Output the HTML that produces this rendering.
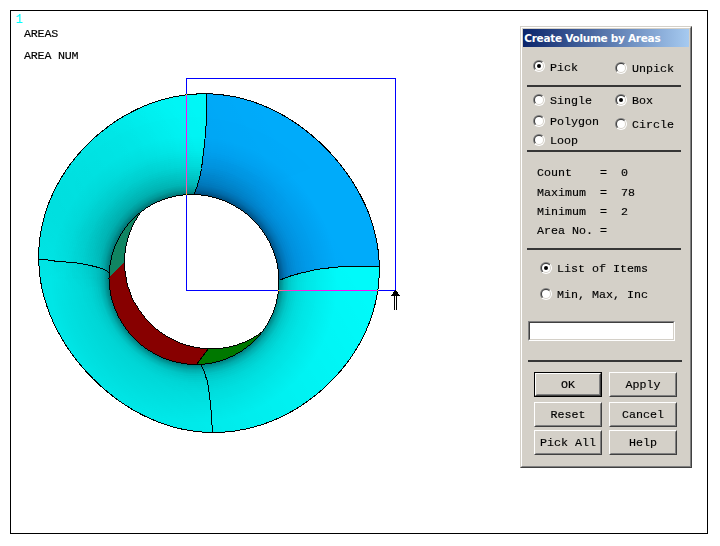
<!DOCTYPE html>
<html><head><meta charset="utf-8"><title>Create Volume by Areas</title>
<style>
html,body{margin:0;padding:0;background:#fff}
body{width:720px;height:546px;position:relative;overflow:hidden;font-family:"Liberation Mono",monospace;font-size:11.67px;color:#000}
.g{font-size:12px;letter-spacing:-0.2px;-webkit-text-stroke-width:0.2px}
.abs{position:absolute}
#frame{position:absolute;left:10px;top:10px;width:696px;height:522px;border:1px solid #000}
.m{position:absolute;white-space:pre;line-height:14px;height:14px;font-family:"Liberation Mono",monospace;font-size:11.67px;-webkit-text-stroke-width:0.15px}
#dlg{position:absolute;left:520px;top:26px;width:172px;height:442px;background:#d4d0c8;box-sizing:border-box;border:1px solid;border-color:#d4d0c8 #404040 #404040 #d4d0c8}
#dlg:before{content:"";position:absolute;left:0;top:0;right:0;bottom:0;border:1px solid;border-color:#fff #808080 #808080 #fff}
#title{position:absolute;left:523px;top:29px;width:166px;height:18px;background:linear-gradient(90deg,#0a246a,#a6caf0);color:#fff;font-family:"DejaVu Sans","Liberation Sans",sans-serif;font-weight:bold;font-size:10.5px;letter-spacing:-0.28px;line-height:18px;white-space:nowrap}
#title span{position:absolute;left:1.3px;top:0}
.r{position:absolute;width:12px;height:12px;border-radius:50%;background:linear-gradient(135deg,#808080 50%,#fff 50%)}
.r i{position:absolute;border-radius:50%}
.r .a{left:1px;top:1px;width:10px;height:10px;background:linear-gradient(135deg,#404040 50%,#d4d0c8 50%)}
.r .b{left:2px;top:2px;width:8px;height:8px;background:#fff}
.r .d{left:4px;top:4px;width:4px;height:4px;background:#000}
.sep{position:absolute;height:2px;background:#363636}
.inp{position:absolute;background:#fff;box-sizing:border-box;border:1px solid;border-color:#808080 #fff #fff #808080}
.inp:before{content:"";position:absolute;left:0;top:0;right:0;bottom:0;border:1px solid;border-color:#404040 #d4d0c8 #d4d0c8 #404040}
.btn{position:absolute;width:68px;height:25px;box-sizing:border-box;background:#d4d0c8;border:1px solid;border-color:#fff #404040 #404040 #fff;text-align:center}
.btn:before{content:"";position:absolute;left:0;top:0;right:0;bottom:0;border:1px solid;border-color:#d4d0c8 #808080 #808080 #d4d0c8}
.btn span{position:absolute;left:0;right:0;top:5px;line-height:14px;-webkit-text-stroke-width:0.15px}
.btn.def{border-color:#000;}
.btn.def:before{border-color:#fff #404040 #404040 #fff}
.btn.def:after{content:"";position:absolute;left:1px;top:1px;right:1px;bottom:1px;border:1px solid;border-color:#d4d0c8 #808080 #808080 #d4d0c8}
#box{position:absolute;left:186px;top:78px;width:208px;height:211px;border:1px solid #ffff00;mix-blend-mode:difference}
</style></head><body>
<svg id="tor" width="720" height="546" viewBox="0 0 720 546" style="position:absolute;left:0;top:0">
<defs>
<clipPath id="cE1"><path d="M379.2,263.1 L379.3,272.0 L378.9,281.0 L377.9,289.9 L376.4,298.7 L374.3,307.4 L371.8,316.0 L368.7,324.4 L365.2,332.6 L361.2,340.6 L356.8,348.4 L352.0,355.9 L346.8,363.2 L341.2,370.2 L335.3,376.9 L329.1,383.2 L322.6,389.3 L315.8,395.0 L308.8,400.4 L301.5,405.5 L293.9,410.2 L286.1,414.4 L278.1,418.3 L269.9,421.8 L261.5,424.8 L253.0,427.3 L244.3,429.3 L235.6,430.9 L226.7,431.9 L217.9,432.4 L209.0,432.4 L200.2,431.9 L191.4,430.8 L182.7,429.3 L174.1,427.2 L165.7,424.7 L157.5,421.7 L149.4,418.3 L141.6,414.6 L133.9,410.4 L126.6,405.9 L119.4,401.1 L112.5,395.9 L105.8,390.5 L99.4,384.9 L93.2,378.9 L87.2,372.7 L81.6,366.3 L76.1,359.6 L71.0,352.7 L66.1,345.6 L61.6,338.2 L57.4,330.6 L53.5,322.8 L50.0,314.7 L47.0,306.5 L44.4,298.1 L42.2,289.5 L40.5,280.8 L39.4,272.0 L38.8,263.1 L38.7,254.2 L39.1,245.2 L40.1,236.3 L41.6,227.5 L43.7,218.8 L46.2,210.2 L49.3,201.8 L52.8,193.6 L56.8,185.6 L61.2,177.8 L66.0,170.3 L71.2,163.0 L76.8,156.0 L82.7,149.3 L88.9,143.0 L95.4,136.9 L102.2,131.2 L109.2,125.8 L116.5,120.7 L124.1,116.0 L131.9,111.8 L139.9,107.9 L148.1,104.4 L156.5,101.4 L165.0,98.9 L173.7,96.9 L182.4,95.3 L191.3,94.3 L200.1,93.8 L209.0,93.8 L217.8,94.3 L226.6,95.4 L235.3,96.9 L243.9,99.0 L252.3,101.5 L260.5,104.5 L268.6,107.9 L276.4,111.6 L284.1,115.8 L291.4,120.3 L298.6,125.1 L305.5,130.3 L312.2,135.7 L318.6,141.3 L324.8,147.3 L330.8,153.5 L336.4,159.9 L341.9,166.6 L347.0,173.5 L351.9,180.6 L356.4,188.0 L360.6,195.6 L364.5,203.4 L368.0,211.5 L371.0,219.7 L373.6,228.1 L375.8,236.7 L377.5,245.4 L378.6,254.2Z"/></clipPath>
<clipPath id="cE2"><ellipse cx="194" cy="279.5" rx="86" ry="84" transform="rotate(45 194 279.5)"/></clipPath>
<filter id="bl" x="-30%" y="-30%" width="160%" height="160%"><feGaussianBlur stdDeviation="7"/></filter>
<filter id="bl2" x="-30%" y="-30%" width="160%" height="160%"><feGaussianBlur stdDeviation="3"/></filter>
<linearGradient id="fade" gradientUnits="userSpaceOnUse" x1="182.6" y1="251.9" x2="159.8" y2="196.7">
<stop offset="0" stop-color="#000"/><stop offset="0.25" stop-color="#333"/><stop offset="0.6" stop-color="#aaa"/><stop offset="1" stop-color="#fff"/></linearGradient>
<linearGradient id="fade2" gradientUnits="userSpaceOnUse" x1="144.5" y1="329" x2="123.3" y2="350.2">
<stop offset="0" stop-color="#fff"/><stop offset="1" stop-color="#000"/></linearGradient>
<mask id="mfade2"><rect x="0" y="0" width="720" height="546" fill="url(#fade2)"/></mask>
<linearGradient id="gdim" gradientUnits="userSpaceOnUse" x1="313.4" y1="203.1" x2="78.5" y2="338.1">
<stop offset="0" stop-color="#000" stop-opacity="0.02"/><stop offset="1" stop-color="#000" stop-opacity="0.10"/></linearGradient>
<radialGradient id="blob" gradientUnits="userSpaceOnUse" cx="100" cy="185" r="105">
<stop offset="0" stop-color="#000" stop-opacity="0.05"/><stop offset="0.5" stop-color="#000" stop-opacity="0.04"/><stop offset="1" stop-color="#000" stop-opacity="0"/></radialGradient>
<mask id="mfade"><rect x="0" y="0" width="720" height="546" fill="url(#fade)"/></mask>
</defs>
<g clip-path="url(#cE1)">
<rect x="30" y="80" width="360" height="360" fill="#00ffff"/>
<path d="M206.4,93.0 L206.4,95.2 L206.4,97.4 L206.4,99.7 L206.4,102.0 L206.4,104.2 L206.4,106.5 L206.4,108.7 L206.4,110.9 L206.4,113.0 L206.4,115.1 L206.3,117.0 L206.3,118.8 L206.2,120.5 L206.2,122.1 L206.1,123.6 L206.1,125.0 L206.0,126.3 L205.9,127.6 L205.8,128.9 L205.7,130.1 L205.6,131.3 L205.5,132.5 L205.4,133.7 L205.3,135.0 L205.2,136.2 L205.1,137.4 L205.0,138.6 L204.9,139.7 L204.8,140.9 L204.7,142.0 L204.5,143.1 L204.4,144.3 L204.3,145.5 L204.1,146.8 L204.0,148.1 L203.8,149.5 L203.6,151.0 L203.4,152.6 L203.2,154.3 L203.0,156.1 L202.8,157.9 L202.6,159.8 L202.4,161.6 L202.2,163.4 L201.9,165.2 L201.7,166.9 L201.5,168.5 L201.2,170.0 L200.9,171.4 L200.7,172.8 L200.4,174.2 L200.1,175.4 L199.8,176.7 L199.5,177.9 L199.2,179.1 L198.9,180.2 L198.6,181.3 L198.3,182.4 L198.0,183.4 L197.7,184.4 L197.4,185.4 L197.1,186.3 L196.8,187.3 L196.4,188.2 L196.1,189.0 L195.8,189.8 L195.4,190.6 L195.1,191.3 L194.9,192.0 L194.6,192.6 L194.4,193.1 L194.2,193.6 L194.1,194.0 L193.9,194.3 L193.9,194.4 L193.8,194.6 L193.8,194.6 L193.8,194.7 L193.8,194.7 L193.8,194.6 L193.8,194.6 L193.7,194.6 L193.7,194.6 L193.7,194.7 L230,250 L280.0,280.0 L280.8,279.7 L281.7,279.4 L282.5,279.0 L283.3,278.7 L284.2,278.4 L285.0,278.0 L285.8,277.7 L286.7,277.4 L287.5,277.1 L288.3,276.8 L289.2,276.5 L290.0,276.2 L290.8,275.9 L291.7,275.7 L292.5,275.4 L293.3,275.1 L294.2,274.9 L295.0,274.6 L295.8,274.4 L296.7,274.2 L297.5,274.0 L298.3,273.7 L299.2,273.5 L300.0,273.3 L300.8,273.1 L301.7,272.9 L302.5,272.7 L303.3,272.5 L304.2,272.3 L305.0,272.2 L305.8,272.0 L306.7,271.8 L307.5,271.6 L308.3,271.5 L309.2,271.3 L310.0,271.1 L310.8,270.9 L311.5,270.8 L312.1,270.6 L312.7,270.4 L313.3,270.2 L313.9,270.1 L314.6,269.9 L315.3,269.7 L316.2,269.6 L317.3,269.4 L318.5,269.2 L320.0,269.0 L321.7,268.8 L323.6,268.6 L325.6,268.3 L327.8,268.1 L330.1,267.8 L332.5,267.5 L335.0,267.3 L337.6,267.0 L340.1,266.8 L342.7,266.6 L345.3,266.4 L347.8,266.3 L350.3,266.2 L352.9,266.1 L355.5,266.1 L358.1,266.0 L360.8,266.0 L363.5,266.0 L366.2,266.0 L368.9,266.0 L371.6,266.0 L374.3,266.0 L377.0,266.0 L379.7,266.0 L430,266 L430,50 L206.4,50Z" fill="#00aeff"/>
<g transform="rotate(45 194 279.5)"><ellipse cx="194" cy="279.5" rx="162.0" ry="160.0" fill="#000" fill-opacity="0.0017"/>
<ellipse cx="194" cy="279.5" rx="160.0" ry="158.0" fill="#000" fill-opacity="0.0017"/>
<ellipse cx="194" cy="279.5" rx="158.0" ry="156.0" fill="#000" fill-opacity="0.0017"/>
<ellipse cx="194" cy="279.5" rx="156.0" ry="154.0" fill="#000" fill-opacity="0.0017"/>
<ellipse cx="194" cy="279.5" rx="154.0" ry="152.0" fill="#000" fill-opacity="0.0017"/>
<ellipse cx="194" cy="279.5" rx="152.0" ry="150.0" fill="#000" fill-opacity="0.0017"/>
<ellipse cx="194" cy="279.5" rx="150.0" ry="148.0" fill="#000" fill-opacity="0.0017"/>
<ellipse cx="194" cy="279.5" rx="148.0" ry="146.0" fill="#000" fill-opacity="0.0017"/>
<ellipse cx="194" cy="279.5" rx="146.0" ry="144.0" fill="#000" fill-opacity="0.0017"/>
<ellipse cx="194" cy="279.5" rx="144.0" ry="142.0" fill="#000" fill-opacity="0.0030"/>
<ellipse cx="194" cy="279.5" rx="142.0" ry="140.0" fill="#000" fill-opacity="0.0031"/>
<ellipse cx="194" cy="279.5" rx="140.0" ry="138.0" fill="#000" fill-opacity="0.0031"/>
<ellipse cx="194" cy="279.5" rx="138.0" ry="136.0" fill="#000" fill-opacity="0.0031"/>
<ellipse cx="194" cy="279.5" rx="136.0" ry="134.0" fill="#000" fill-opacity="0.0031"/>
<ellipse cx="194" cy="279.5" rx="134.0" ry="132.0" fill="#000" fill-opacity="0.0031"/>
<ellipse cx="194" cy="279.5" rx="132.0" ry="130.0" fill="#000" fill-opacity="0.0031"/>
<ellipse cx="194" cy="279.5" rx="130.0" ry="128.0" fill="#000" fill-opacity="0.0031"/>
<ellipse cx="194" cy="279.5" rx="128.0" ry="126.0" fill="#000" fill-opacity="0.0031"/>
<ellipse cx="194" cy="279.5" rx="126.0" ry="124.0" fill="#000" fill-opacity="0.0031"/>
<ellipse cx="194" cy="279.5" rx="124.0" ry="122.0" fill="#000" fill-opacity="0.0037"/>
<ellipse cx="194" cy="279.5" rx="122.0" ry="120.0" fill="#000" fill-opacity="0.0037"/>
<ellipse cx="194" cy="279.5" rx="120.0" ry="118.0" fill="#000" fill-opacity="0.0037"/>
<ellipse cx="194" cy="279.5" rx="118.0" ry="116.0" fill="#000" fill-opacity="0.0037"/>
<ellipse cx="194" cy="279.5" rx="116.0" ry="114.0" fill="#000" fill-opacity="0.0037"/>
<ellipse cx="194" cy="279.5" rx="114.0" ry="112.0" fill="#000" fill-opacity="0.0037"/>
<ellipse cx="194" cy="279.5" rx="112.0" ry="110.0" fill="#000" fill-opacity="0.0037"/>
<ellipse cx="194" cy="279.5" rx="110.0" ry="108.0" fill="#000" fill-opacity="0.0038"/>
<ellipse cx="194" cy="279.5" rx="108.0" ry="106.0" fill="#000" fill-opacity="0.0038"/>
<ellipse cx="194" cy="279.5" rx="106.0" ry="104.0" fill="#000" fill-opacity="0.0038"/>
<ellipse cx="194" cy="279.5" rx="104.0" ry="102.0" fill="#000" fill-opacity="0.0087"/>
<ellipse cx="194" cy="279.5" rx="102.0" ry="100.0" fill="#000" fill-opacity="0.0088"/>
<ellipse cx="194" cy="279.5" rx="100.0" ry="98.0" fill="#000" fill-opacity="0.0088"/>
<ellipse cx="194" cy="279.5" rx="98.0" ry="96.0" fill="#000" fill-opacity="0.0089"/>
<ellipse cx="194" cy="279.5" rx="96.0" ry="94.0" fill="#000" fill-opacity="0.0090"/>
<ellipse cx="194" cy="279.5" rx="95.0" ry="93.0" fill="#000" fill-opacity="0.0227"/>
<ellipse cx="194" cy="279.5" rx="94.0" ry="92.0" fill="#000" fill-opacity="0.0233"/>
<ellipse cx="194" cy="279.5" rx="93.0" ry="91.0" fill="#000" fill-opacity="0.0238"/>
<ellipse cx="194" cy="279.5" rx="92.0" ry="90.0" fill="#000" fill-opacity="0.0244"/>
<ellipse cx="194" cy="279.5" rx="91.0" ry="89.0" fill="#000" fill-opacity="0.0500"/>
<ellipse cx="194" cy="279.5" rx="90.0" ry="88.0" fill="#000" fill-opacity="0.0526"/>
<ellipse cx="194" cy="279.5" rx="89.0" ry="87.0" fill="#000" fill-opacity="0.0556"/>
<ellipse cx="194" cy="279.5" rx="88.0" ry="86.0" fill="#000" fill-opacity="0.0637"/>
<ellipse cx="194" cy="279.5" rx="87.0" ry="85.0" fill="#000" fill-opacity="0.0681"/>
<ellipse cx="194" cy="279.5" rx="86.0" ry="84.0" fill="#000" fill-opacity="0.0730"/></g>
<g mask="url(#mfade2)"><g transform="rotate(45 194 279.5)"><ellipse cx="194" cy="279.5" rx="134.0" ry="132.0" fill="#000" fill-opacity="0.0010"/>
<ellipse cx="194" cy="279.5" rx="132.0" ry="130.0" fill="#000" fill-opacity="0.0010"/>
<ellipse cx="194" cy="279.5" rx="130.0" ry="128.0" fill="#000" fill-opacity="0.0010"/>
<ellipse cx="194" cy="279.5" rx="128.0" ry="126.0" fill="#000" fill-opacity="0.0010"/>
<ellipse cx="194" cy="279.5" rx="126.0" ry="124.0" fill="#000" fill-opacity="0.0010"/>
<ellipse cx="194" cy="279.5" rx="124.0" ry="122.0" fill="#000" fill-opacity="0.0054"/>
<ellipse cx="194" cy="279.5" rx="122.0" ry="120.0" fill="#000" fill-opacity="0.0055"/>
<ellipse cx="194" cy="279.5" rx="120.0" ry="118.0" fill="#000" fill-opacity="0.0055"/>
<ellipse cx="194" cy="279.5" rx="118.0" ry="116.0" fill="#000" fill-opacity="0.0055"/>
<ellipse cx="194" cy="279.5" rx="116.0" ry="114.0" fill="#000" fill-opacity="0.0055"/>
<ellipse cx="194" cy="279.5" rx="114.0" ry="112.0" fill="#000" fill-opacity="0.0068"/>
<ellipse cx="194" cy="279.5" rx="112.0" ry="110.0" fill="#000" fill-opacity="0.0069"/>
<ellipse cx="194" cy="279.5" rx="110.0" ry="108.0" fill="#000" fill-opacity="0.0069"/>
<ellipse cx="194" cy="279.5" rx="108.0" ry="106.0" fill="#000" fill-opacity="0.0070"/>
<ellipse cx="194" cy="279.5" rx="106.0" ry="104.0" fill="#000" fill-opacity="0.0070"/>
<ellipse cx="194" cy="279.5" rx="104.0" ry="102.0" fill="#000" fill-opacity="0.0107"/>
<ellipse cx="194" cy="279.5" rx="102.0" ry="100.0" fill="#000" fill-opacity="0.0108"/>
<ellipse cx="194" cy="279.5" rx="100.0" ry="98.0" fill="#000" fill-opacity="0.0155"/>
<ellipse cx="194" cy="279.5" rx="98.0" ry="96.0" fill="#000" fill-opacity="0.0204"/>
<ellipse cx="194" cy="279.5" rx="96.0" ry="94.0" fill="#000" fill-opacity="0.0209"/></g></g>
<g mask="url(#mfade)"><g transform="rotate(45 194 279.5)"><ellipse cx="194" cy="279.5" rx="164.0" ry="162.0" fill="#000" fill-opacity="0.0050"/>
<ellipse cx="194" cy="279.5" rx="162.0" ry="160.0" fill="#000" fill-opacity="0.0050"/>
<ellipse cx="194" cy="279.5" rx="160.0" ry="158.0" fill="#000" fill-opacity="0.0051"/>
<ellipse cx="194" cy="279.5" rx="158.0" ry="156.0" fill="#000" fill-opacity="0.0051"/>
<ellipse cx="194" cy="279.5" rx="156.0" ry="154.0" fill="#000" fill-opacity="0.0051"/>
<ellipse cx="194" cy="279.5" rx="154.0" ry="152.0" fill="#000" fill-opacity="0.0045"/>
<ellipse cx="194" cy="279.5" rx="152.0" ry="150.0" fill="#000" fill-opacity="0.0045"/>
<ellipse cx="194" cy="279.5" rx="150.0" ry="148.0" fill="#000" fill-opacity="0.0046"/>
<ellipse cx="194" cy="279.5" rx="148.0" ry="146.0" fill="#000" fill-opacity="0.0046"/>
<ellipse cx="194" cy="279.5" rx="146.0" ry="144.0" fill="#000" fill-opacity="0.0046"/>
<ellipse cx="194" cy="279.5" rx="144.0" ry="142.0" fill="#000" fill-opacity="0.0046"/>
<ellipse cx="194" cy="279.5" rx="142.0" ry="140.0" fill="#000" fill-opacity="0.0046"/>
<ellipse cx="194" cy="279.5" rx="140.0" ry="138.0" fill="#000" fill-opacity="0.0047"/>
<ellipse cx="194" cy="279.5" rx="138.0" ry="136.0" fill="#000" fill-opacity="0.0047"/>
<ellipse cx="194" cy="279.5" rx="136.0" ry="134.0" fill="#000" fill-opacity="0.0047"/>
<ellipse cx="194" cy="279.5" rx="134.0" ry="132.0" fill="#000" fill-opacity="0.0047"/>
<ellipse cx="194" cy="279.5" rx="132.0" ry="130.0" fill="#000" fill-opacity="0.0047"/>
<ellipse cx="194" cy="279.5" rx="130.0" ry="128.0" fill="#000" fill-opacity="0.0060"/>
<ellipse cx="194" cy="279.5" rx="128.0" ry="126.0" fill="#000" fill-opacity="0.0073"/>
<ellipse cx="194" cy="279.5" rx="126.0" ry="124.0" fill="#000" fill-opacity="0.0073"/>
<ellipse cx="194" cy="279.5" rx="124.0" ry="122.0" fill="#000" fill-opacity="0.0074"/>
<ellipse cx="194" cy="279.5" rx="122.0" ry="120.0" fill="#000" fill-opacity="0.0074"/>
<ellipse cx="194" cy="279.5" rx="120.0" ry="118.0" fill="#000" fill-opacity="0.0075"/>
<ellipse cx="194" cy="279.5" rx="118.0" ry="116.0" fill="#000" fill-opacity="0.0075"/>
<ellipse cx="194" cy="279.5" rx="116.0" ry="114.0" fill="#000" fill-opacity="0.0076"/>
<ellipse cx="194" cy="279.5" rx="114.0" ry="112.0" fill="#000" fill-opacity="0.0115"/>
<ellipse cx="194" cy="279.5" rx="112.0" ry="110.0" fill="#000" fill-opacity="0.0116"/>
<ellipse cx="194" cy="279.5" rx="110.0" ry="108.0" fill="#000" fill-opacity="0.0118"/>
<ellipse cx="194" cy="279.5" rx="108.0" ry="106.0" fill="#000" fill-opacity="0.0119"/>
<ellipse cx="194" cy="279.5" rx="106.0" ry="104.0" fill="#000" fill-opacity="0.0120"/>
<ellipse cx="194" cy="279.5" rx="104.0" ry="102.0" fill="#000" fill-opacity="0.0049"/>
<ellipse cx="194" cy="279.5" rx="102.0" ry="100.0" fill="#000" fill-opacity="0.0049"/>
<ellipse cx="194" cy="279.5" rx="100.0" ry="98.0" fill="#000" fill-opacity="0.0049"/>
<ellipse cx="194" cy="279.5" rx="98.0" ry="96.0" fill="#000" fill-opacity="0.0050"/>
<ellipse cx="194" cy="279.5" rx="96.0" ry="94.0" fill="#000" fill-opacity="0.0050"/>
<ellipse cx="194" cy="279.5" rx="95.0" ry="93.0" fill="#000" fill-opacity="0.0050"/>
<ellipse cx="194" cy="279.5" rx="94.0" ry="92.0" fill="#000" fill-opacity="0.0050"/>
<ellipse cx="194" cy="279.5" rx="93.0" ry="91.0" fill="#000" fill-opacity="0.0051"/>
<ellipse cx="194" cy="279.5" rx="92.0" ry="90.0" fill="#000" fill-opacity="0.0051"/>
<ellipse cx="194" cy="279.5" rx="91.0" ry="89.0" fill="#000" fill-opacity="0.0051"/></g></g>
<rect x="0" y="60" width="260" height="280" fill="url(#blob)"/>
<rect x="30" y="80" width="360" height="360" fill="url(#gdim)"/>
</g>
<g shape-rendering="crispEdges">
<g clip-path="url(#cE2)">
<rect x="100" y="190" width="190" height="180" fill="#870000"/>
<path d="M90,295.5 L124.4,262.2 L160,180 L90,180Z" fill="#108562"/>
<path d="M208.3,348.7 L196.7,364.2 L190,380 L290,380 L290,300Z" fill="#007800"/>
<path d="M208.3,348.7 L196.7,364.2" stroke="#000" stroke-width="1" fill="none"/>
<ellipse cx="209.5" cy="263.9" rx="86" ry="84" transform="rotate(45 209.5 263.9)" fill="#fff" stroke="#000" stroke-width="1"/>
</g>
<ellipse cx="194" cy="279.5" rx="86" ry="84" transform="rotate(45 194 279.5)" fill="none" stroke="#000" stroke-width="1"/>
<path d="M379.2,263.1 L379.3,272.0 L378.9,281.0 L377.9,289.9 L376.4,298.7 L374.3,307.4 L371.8,316.0 L368.7,324.4 L365.2,332.6 L361.2,340.6 L356.8,348.4 L352.0,355.9 L346.8,363.2 L341.2,370.2 L335.3,376.9 L329.1,383.2 L322.6,389.3 L315.8,395.0 L308.8,400.4 L301.5,405.5 L293.9,410.2 L286.1,414.4 L278.1,418.3 L269.9,421.8 L261.5,424.8 L253.0,427.3 L244.3,429.3 L235.6,430.9 L226.7,431.9 L217.9,432.4 L209.0,432.4 L200.2,431.9 L191.4,430.8 L182.7,429.3 L174.1,427.2 L165.7,424.7 L157.5,421.7 L149.4,418.3 L141.6,414.6 L133.9,410.4 L126.6,405.9 L119.4,401.1 L112.5,395.9 L105.8,390.5 L99.4,384.9 L93.2,378.9 L87.2,372.7 L81.6,366.3 L76.1,359.6 L71.0,352.7 L66.1,345.6 L61.6,338.2 L57.4,330.6 L53.5,322.8 L50.0,314.7 L47.0,306.5 L44.4,298.1 L42.2,289.5 L40.5,280.8 L39.4,272.0 L38.8,263.1 L38.7,254.2 L39.1,245.2 L40.1,236.3 L41.6,227.5 L43.7,218.8 L46.2,210.2 L49.3,201.8 L52.8,193.6 L56.8,185.6 L61.2,177.8 L66.0,170.3 L71.2,163.0 L76.8,156.0 L82.7,149.3 L88.9,143.0 L95.4,136.9 L102.2,131.2 L109.2,125.8 L116.5,120.7 L124.1,116.0 L131.9,111.8 L139.9,107.9 L148.1,104.4 L156.5,101.4 L165.0,98.9 L173.7,96.9 L182.4,95.3 L191.3,94.3 L200.1,93.8 L209.0,93.8 L217.8,94.3 L226.6,95.4 L235.3,96.9 L243.9,99.0 L252.3,101.5 L260.5,104.5 L268.6,107.9 L276.4,111.6 L284.1,115.8 L291.4,120.3 L298.6,125.1 L305.5,130.3 L312.2,135.7 L318.6,141.3 L324.8,147.3 L330.8,153.5 L336.4,159.9 L341.9,166.6 L347.0,173.5 L351.9,180.6 L356.4,188.0 L360.6,195.6 L364.5,203.4 L368.0,211.5 L371.0,219.7 L373.6,228.1 L375.8,236.7 L377.5,245.4 L378.6,254.2Z" fill="none" stroke="#000" stroke-width="1"/>
<path d="M206.4,93.0 L206.4,95.2 L206.4,97.4 L206.4,99.7 L206.4,102.0 L206.4,104.2 L206.4,106.5 L206.4,108.7 L206.4,110.9 L206.4,113.0 L206.4,115.1 L206.3,117.0 L206.3,118.8 L206.2,120.5 L206.2,122.1 L206.1,123.6 L206.1,125.0 L206.0,126.3 L205.9,127.6 L205.8,128.9 L205.7,130.1 L205.6,131.3 L205.5,132.5 L205.4,133.7 L205.3,135.0 L205.2,136.2 L205.1,137.4 L205.0,138.6 L204.9,139.7 L204.8,140.9 L204.7,142.0 L204.5,143.1 L204.4,144.3 L204.3,145.5 L204.1,146.8 L204.0,148.1 L203.8,149.5 L203.6,151.0 L203.4,152.6 L203.2,154.3 L203.0,156.1 L202.8,157.9 L202.6,159.8 L202.4,161.6 L202.2,163.4 L201.9,165.2 L201.7,166.9 L201.5,168.5 L201.2,170.0 L200.9,171.4 L200.7,172.8 L200.4,174.2 L200.1,175.4 L199.8,176.7 L199.5,177.9 L199.2,179.1 L198.9,180.2 L198.6,181.3 L198.3,182.4 L198.0,183.4 L197.7,184.4 L197.4,185.4 L197.1,186.3 L196.8,187.3 L196.4,188.2 L196.1,189.0 L195.8,189.8 L195.4,190.6 L195.1,191.3 L194.9,192.0 L194.6,192.6 L194.4,193.1 L194.2,193.6 L194.1,194.0 L193.9,194.3 L193.9,194.4 L193.8,194.6 L193.8,194.6 L193.8,194.7 L193.8,194.7 L193.8,194.6 L193.8,194.6 L193.7,194.6 L193.7,194.6 L193.7,194.7 M38.3,259.5 L39.3,259.6 L40.3,259.6 L41.4,259.7 L42.4,259.7 L43.5,259.8 L44.5,259.8 L45.5,259.9 L46.5,259.9 L47.5,260.0 L48.4,260.1 L49.2,260.1 L50.0,260.2 L50.7,260.3 L51.2,260.4 L51.7,260.4 L52.1,260.5 L52.5,260.6 L52.9,260.7 L53.2,260.8 L53.6,260.9 L54.0,260.9 L54.5,261.0 L55.1,261.1 L55.8,261.2 L56.6,261.3 L57.5,261.4 L58.5,261.4 L59.5,261.5 L60.6,261.6 L61.7,261.7 L62.8,261.7 L63.9,261.8 L65.0,261.9 L66.0,262.0 L67.0,262.0 L67.9,262.1 L68.8,262.2 L69.6,262.2 L70.4,262.3 L71.1,262.4 L71.9,262.4 L72.6,262.5 L73.3,262.5 L74.0,262.6 L74.7,262.7 L75.3,262.7 L76.0,262.8 L76.7,262.9 L77.4,263.0 L78.0,263.1 L78.6,263.2 L79.2,263.3 L79.8,263.4 L80.4,263.5 L81.0,263.6 L81.6,263.7 L82.2,263.8 L82.9,263.9 L83.5,264.1 L84.2,264.2 L84.9,264.3 L85.6,264.5 L86.4,264.6 L87.1,264.8 L87.9,265.0 L88.6,265.1 L89.4,265.3 L90.2,265.5 L91.0,265.6 L91.8,265.8 L92.5,266.0 L93.3,266.2 L94.1,266.4 L94.9,266.6 L95.7,266.8 L96.5,267.0 L97.3,267.2 L98.0,267.4 L98.8,267.6 L99.6,267.8 L100.4,268.1 L101.1,268.3 L101.8,268.5 L102.5,268.8 L103.1,269.1 L103.8,269.4 L104.4,269.6 L104.9,270.0 L105.5,270.3 L106.0,270.6 L106.5,270.9 L107.1,271.2 L107.6,271.5 L108.1,271.9 L108.6,272.2 L109.2,272.5 M280.0,280.0 L280.8,279.7 L281.7,279.4 L282.5,279.0 L283.3,278.7 L284.2,278.4 L285.0,278.0 L285.8,277.7 L286.7,277.4 L287.5,277.1 L288.3,276.8 L289.2,276.5 L290.0,276.2 L290.8,275.9 L291.7,275.7 L292.5,275.4 L293.3,275.1 L294.2,274.9 L295.0,274.6 L295.8,274.4 L296.7,274.2 L297.5,274.0 L298.3,273.7 L299.2,273.5 L300.0,273.3 L300.8,273.1 L301.7,272.9 L302.5,272.7 L303.3,272.5 L304.2,272.3 L305.0,272.2 L305.8,272.0 L306.7,271.8 L307.5,271.6 L308.3,271.5 L309.2,271.3 L310.0,271.1 L310.8,270.9 L311.5,270.8 L312.1,270.6 L312.7,270.4 L313.3,270.2 L313.9,270.1 L314.6,269.9 L315.3,269.7 L316.2,269.6 L317.3,269.4 L318.5,269.2 L320.0,269.0 L321.7,268.8 L323.6,268.6 L325.6,268.3 L327.8,268.1 L330.1,267.8 L332.5,267.5 L335.0,267.3 L337.6,267.0 L340.1,266.8 L342.7,266.6 L345.3,266.4 L347.8,266.3 L350.3,266.2 L352.9,266.1 L355.5,266.1 L358.1,266.0 L360.8,266.0 L363.5,266.0 L366.2,266.0 L368.9,266.0 L371.6,266.0 L374.3,266.0 L377.0,266.0 L379.7,266.0 M200.8,364.2 L201.1,364.8 L201.3,365.3 L201.6,365.9 L201.9,366.5 L202.2,367.1 L202.5,367.7 L202.8,368.2 L203.0,368.8 L203.3,369.4 L203.5,369.9 L203.8,370.5 L204.0,371.0 L204.2,371.5 L204.4,372.0 L204.5,372.5 L204.7,373.0 L204.8,373.4 L205.0,373.9 L205.1,374.3 L205.3,374.8 L205.4,375.3 L205.5,375.7 L205.7,376.2 L205.8,376.7 L205.9,377.2 L206.1,377.6 L206.2,378.0 L206.4,378.4 L206.5,378.7 L206.7,379.1 L206.8,379.6 L207.0,380.1 L207.1,380.7 L207.3,381.3 L207.4,382.1 L207.6,383.0 L207.8,384.0 L208.0,385.2 L208.2,386.4 L208.4,387.8 L208.6,389.2 L208.8,390.6 L209.0,392.2 L209.2,393.7 L209.4,395.3 L209.6,396.9 L209.8,398.4 L210.0,400.0 L210.2,401.6 L210.3,403.2 L210.5,404.9 L210.7,406.7 L210.8,408.5 L211.0,410.2 L211.1,412.0 L211.2,413.7 L211.4,415.4 L211.5,417.0 L211.6,418.6 L211.7,420.0 L211.8,421.3 L211.9,422.6 L211.9,423.8 L212.0,424.9 L212.0,426.0 L212.1,427.0 L212.1,428.0 L212.1,429.1 L212.2,430.1 L212.2,431.1 L212.3,432.1 L212.3,433.2" fill="none" stroke="#000" stroke-width="1"/>
</g>
</svg>
<div id="box"></div>
<svg class="abs" style="left:385px;top:285px" width="20" height="30" viewBox="385 285 20 30" shape-rendering="crispEdges"><path d="M395.5,290 L400.5,296 L390.5,296Z" fill="#000"/><rect x="394" y="296" width="3" height="14" fill="#fff"/><rect x="394" y="296" width="1" height="14" fill="#000"/><rect x="396" y="296" width="1" height="14" fill="#000"/></svg>
<div id="frame"></div>
<span class="m" style="left:16px;top:11.5px;color:#00ffff;font-size:13.5px;line-height:16px;transform:scaleX(.85);transform-origin:0 0">1</span>
<span class="m g" style="left:24px;top:27px">AREAS</span>
<span class="m g" style="left:24px;top:49px">AREA NUM</span>
<div id="dlg"></div>
<div id="title"><span>Create Volume by Areas</span></div>
<span class="r" style="left:533px;top:60px"><i class="a"></i><i class="b"></i><i class="d"></i></span>
<span class="m" style="left:550px;top:61px">Pick</span>
<span class="r" style="left:615px;top:62px"><i class="a"></i><i class="b"></i></span>
<span class="m" style="left:632px;top:62px">Unpick</span>
<span class="r" style="left:533px;top:94px"><i class="a"></i><i class="b"></i></span>
<span class="m" style="left:550px;top:94px">Single</span>
<span class="r" style="left:615px;top:94px"><i class="a"></i><i class="b"></i><i class="d"></i></span>
<span class="m" style="left:632px;top:94px">Box</span>
<span class="r" style="left:533px;top:115px"><i class="a"></i><i class="b"></i></span>
<span class="m" style="left:550px;top:115px">Polygon</span>
<span class="r" style="left:615px;top:118px"><i class="a"></i><i class="b"></i></span>
<span class="m" style="left:632px;top:118px">Circle</span>
<span class="r" style="left:533px;top:134px"><i class="a"></i><i class="b"></i></span>
<span class="m" style="left:550px;top:134px">Loop</span>
<span class="m" style="left:537px;top:166px">Count&nbsp;&nbsp;&nbsp;&nbsp;=&nbsp;&nbsp;0</span>
<span class="m" style="left:537px;top:186px">Maximum&nbsp;&nbsp;=&nbsp;&nbsp;78</span>
<span class="m" style="left:537px;top:205px">Minimum&nbsp;&nbsp;=&nbsp;&nbsp;2</span>
<span class="m" style="left:537px;top:224px">Area No. =</span>
<span class="r" style="left:540px;top:262px"><i class="a"></i><i class="b"></i><i class="d"></i></span>
<span class="m" style="left:557px;top:262px">List of Items</span>
<span class="r" style="left:540px;top:288px"><i class="a"></i><i class="b"></i></span>
<span class="m" style="left:557px;top:288px">Min, Max, Inc</span>
<div class="sep" style="left:527px;top:85px;width:154px"></div>
<div class="sep" style="left:527px;top:150px;width:154px"></div>
<div class="sep" style="left:527px;top:248px;width:154px"></div>
<div class="sep" style="left:528px;top:360px;width:154px"></div>
<div class="inp" style="left:528px;top:321px;width:147px;height:20px"></div>
<div class="btn def" style="left:534px;top:372px"><span>OK</span></div>
<div class="btn" style="left:609px;top:372px"><span>Apply</span></div>
<div class="btn" style="left:534px;top:402px"><span>Reset</span></div>
<div class="btn" style="left:609px;top:402px"><span>Cancel</span></div>
<div class="btn" style="left:534px;top:430px"><span>Pick All</span></div>
<div class="btn" style="left:609px;top:430px"><span>Help</span></div>
</body></html>
